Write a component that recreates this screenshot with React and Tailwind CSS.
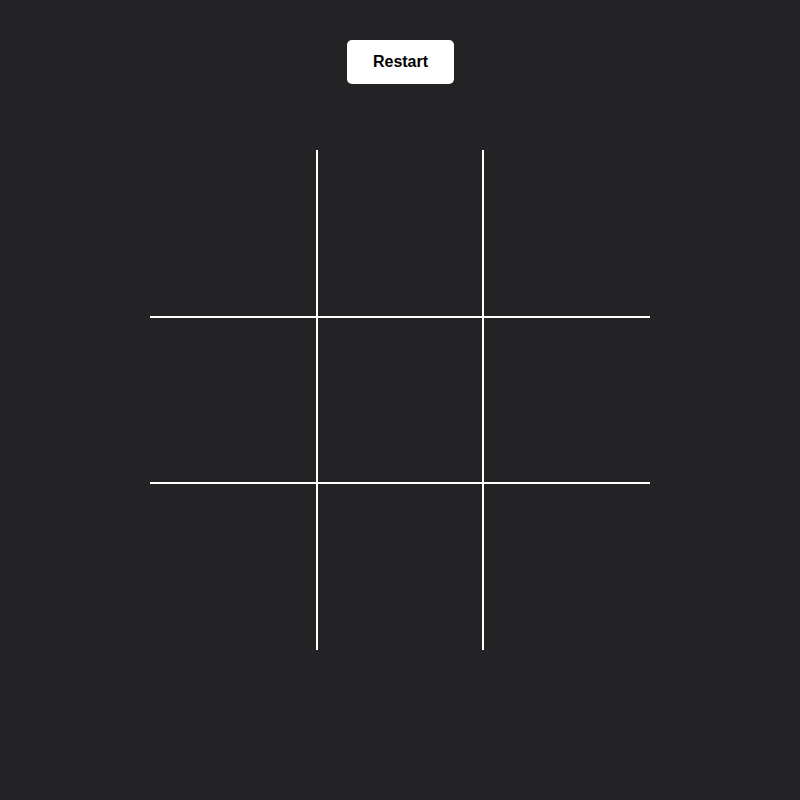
import React, { useState } from 'react';

const LINES = [
  [0, 1, 2], [3, 4, 5], [6, 7, 8],
  [0, 3, 6], [1, 4, 7], [2, 5, 8],
  [0, 4, 8], [2, 4, 6]
];

function winnerOf(board) {
  for (const [a, b, c] of LINES) {
    if (board[a] && board[a] === board[b] && board[a] === board[c]) return board[a];
  }
  return null;
}

// border classes per cell so only the inner grid lines show
const CELL_BORDERS = [
  '', 'border-x-2', '',
  'border-y-2', 'border-2', 'border-y-2',
  '', 'border-x-2', ''
];

function App() {
  const [board, setBoard] = useState(Array(9).fill(null));
  const [xNext, setXNext] = useState(true);

  const play = (i) => {
    if (board[i] || winnerOf(board)) return;
    const next = board.slice();
    next[i] = xNext ? 'X' : 'O';
    setBoard(next);
    setXNext(!xNext);
  };

  const restart = () => {
    setBoard(Array(9).fill(null));
    setXNext(true);
  };

  return (
    <div
      className="min-h-screen w-full bg-[#232225] flex flex-col items-center pt-10"
      style={{ fontFamily: '"Liberation Sans", Arial, sans-serif' }}
    >
      <button
        onClick={restart}
        className="w-[107px] h-[44px] ml-px rounded-[5px] bg-white text-black font-bold text-base"
      >
        Restart
      </button>

      <div className="mt-[66px] grid grid-cols-[166px_168px_166px] grid-rows-[166px_168px_166px]">
        {board.map((cell, i) => (
          <div
            key={i}
            onClick={() => play(i)}
            className={`border-white flex items-center justify-center text-white text-6xl font-bold cursor-pointer ${CELL_BORDERS[i]}`}
          >
            {cell}
          </div>
        ))}
      </div>
    </div>
  );
}

export default App;
